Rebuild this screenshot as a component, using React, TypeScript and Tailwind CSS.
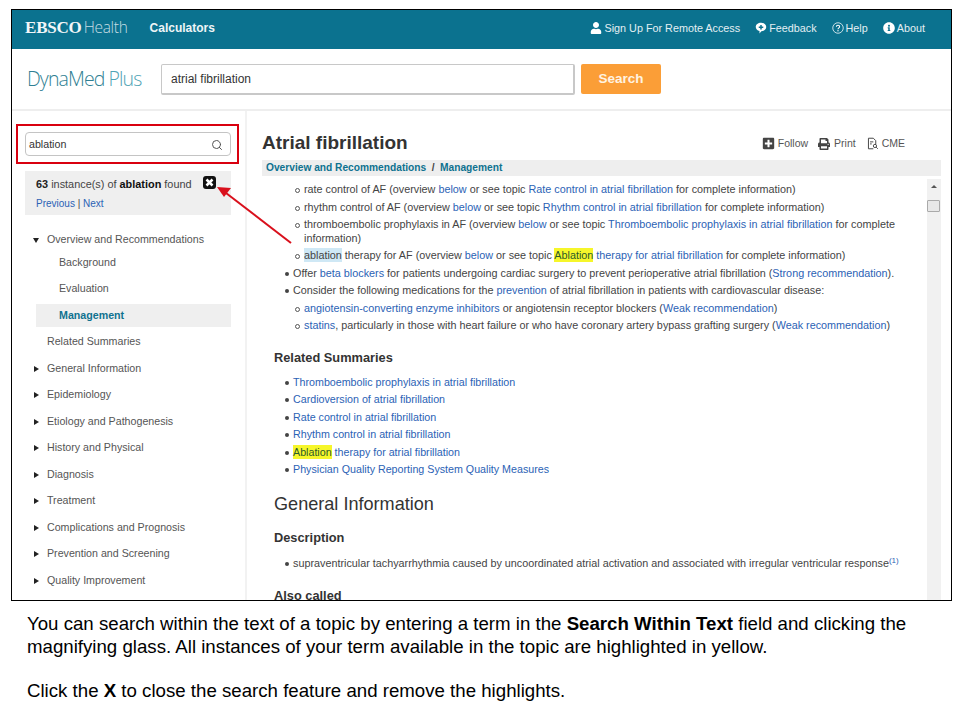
import { FaUser, FaInfoCircle, FaPlusSquare, FaPrint } from 'react-icons/fa'
import { Search } from 'lucide-react'
import type { ReactNode } from 'react'

const arial = "font-['Liberation_Sans',Arial,sans-serif]"

function A({ children }: { children: ReactNode }) {
  return <span className="text-[#2b62b5]">{children}</span>
}

function Hit({ children }: { children: ReactNode }) {
  return <span className="bg-[#f6f62a] text-[#2b5a2b] py-px">{children}</span>
}

const Circle = () => <span className="absolute left-[-9px] top-[5px] w-[5px] h-[5px] rounded-full border border-[#555]" />
const Dot = () => <span className="absolute left-[-8px] top-[5px] w-[4px] h-[4px] rounded-full bg-[#444]" />

function Sub({ children }: { children: ReactNode }) {
  return (
    <li className="relative ml-[30px] pb-1">
      <Circle />
      {children}
    </li>
  )
}

function Item({ children }: { children: ReactNode }) {
  return (
    <li className="relative ml-[19px] pb-1">
      <Dot />
      {children}
    </li>
  )
}

function NavRow({ label, arrow }: { label: string; arrow?: 'right' | 'down' }) {
  return (
    <div className="h-[26.5px] flex items-center relative pl-[22px] text-[#555]">
      {arrow === 'right' && <span className="absolute left-[9px] top-[10px] border-y-[3px] border-y-transparent border-l-[5px] border-l-[#222]" />}
      {arrow === 'down' && <span className="absolute left-[8px] top-[11px] border-x-[3px] border-x-transparent border-t-[5px] border-t-[#222]" />}
      {label}
    </div>
  )
}

export default function App() {
  const navItems = [
    'General Information',
    'Epidemiology',
    'Etiology and Pathogenesis',
    'History and Physical',
    'Diagnosis',
    'Treatment',
    'Complications and Prognosis',
    'Prevention and Screening',
    'Quality Improvement',
  ]

  return (
    <div className={`relative w-[960px] h-[720px] bg-white overflow-hidden pt-[9px] pl-[11px] ${arial}`}>
      <div className="w-[941px] h-[592px] border border-black overflow-hidden flex flex-col">
        {/* top bar */}
        <div className="h-[39px] shrink-0 bg-[#0b728f] flex items-center pl-[13px] pr-[26px] pb-[3px] text-white">
          <span className="font-['Liberation_Serif',serif] font-bold text-[17px] tracking-[-0.2px] text-[#f2f6f8]">EBSCO</span>
          <span className="font-['Open_Sans',sans-serif] font-light text-[15.5px] ml-[2px] text-[#c6dde4] tracking-[-0.3px]">Health</span>
          <span className="ml-[22px] font-bold text-[12px] text-[#eef5f7]">Calculators</span>
          <div className="ml-auto flex items-center text-[10.8px] text-[#e3eff3]">
            <FaUser className="w-[12px] h-[12px] mr-[3px] text-white" />
            <span>Sign Up For Remote Access</span>
            <svg viewBox="0 0 16 16" className="w-[12px] h-[12px] ml-[15px] mr-[2px]">
              <path fill="#fff" fillRule="evenodd" d="M8 1c4 0 7 2.5 7 5.7 0 3.2-3 5.500-6.500 5.500L6 15.300V12C3 11.300 1 9.300 1 6.700 1 3.500 4 1 8 1zM7 4v2H5v2h2v2h2V8h2V6H9V4z" />
            </svg>
            <span>Feedback</span>
            <svg viewBox="0 0 16 16" className="w-[12px] h-[12px] ml-[15px] mr-[2px]">
              <circle cx="8" cy="8" r="7" fill="none" stroke="#fff" strokeWidth="1" />
              <path fill="none" stroke="#fff" strokeWidth="1.400" d="M5.800 6.300C5.800 5 6.800 4.300 8 4.300s2.200.8 2.200 1.900c0 1.500-2.200 1.600-2.200 3.300" />
              <circle cx="8" cy="11.600" r="0.900" fill="#fff" />
            </svg>
            <span>Help</span>
            <FaInfoCircle className="w-[12px] h-[12px] ml-[15px] mr-[2px] text-white" />
            <span>About</span>
          </div>
        </div>

        {/* search bar */}
        <div className="h-[62px] shrink-0 border-b-2 border-[#eeeeee] flex items-start pl-[15px]">
          <div className="mt-[16px] w-[119px] whitespace-nowrap font-['Open_Sans',sans-serif] font-light text-[19.5px] leading-[28px] tracking-[-0.9px] text-[#2f7f93]">
            DynaMed <span className="text-[#4fa3b5]">Plus</span>
          </div>
          <div className="ml-[15px] mt-[15px] w-[414px] h-[31px] rounded-[2px] border border-[#c8c8c8] border-b-2 border-r-2 flex items-center pl-[9px] text-[12px] text-[#333]">
            atrial fibrillation
          </div>
          <div className="ml-[6px] mt-[15px] w-[80px] h-[30px] rounded-[2px] bg-[#fb9e37] flex items-center justify-center text-[13.5px] font-bold text-[#fff3e2]">
            Search
          </div>
        </div>

        <div className="flex flex-1 min-h-0">
          {/* left column */}
          <div className="w-[235px] shrink-0 border-r-2 border-[#f2f2f2] text-[10.66px] pl-[13px] pr-[14px] pt-[21px]">
            <div className="w-[206px] h-[24px] rounded-[4px] border border-[#c4c4c4] flex items-center pl-[3px] pr-[7px] pt-px text-[#333]">
              ablation
              <Search className="ml-auto w-[12px] h-[12px] text-[#555]" strokeWidth={2} />
            </div>
            <div className="mt-[15px] w-[206px] h-[44px] bg-[#efefef] pl-[11px] pt-[7px] relative leading-[13px] text-[#444]">
              <div className="text-[10.9px]">
                <b className="text-[#222]">63</b> instance(s) of <b className="text-[#111]">ablation</b> found
              </div>
              <div className="mt-[6px] text-[10px]">
                <A>Previous</A> | <A>Next</A>
              </div>
              <svg viewBox="0 0 13 13" className="absolute right-[15px] top-[5px] w-[13px] h-[13px]">
                <rect width="13" height="13" rx="3" fill="#111" />
                <path d="M3.500 3.500l6 6M9.500 3.500l-6 6" stroke="#fff" strokeWidth="2.500" />
              </svg>
            </div>

            <div className="mt-[12px] w-[206px]">
              <NavRow label="Overview and Recommendations" arrow="down" />
              <div className="-mt-[4px] h-[26.500px] flex items-center pl-[23px] ml-[11px] text-[#555]">Background</div>
              <div className="h-[26.500px] flex items-center pl-[23px] ml-[11px] text-[#555]">Evaluation</div>
              <div className="h-[23px] my-[1.750px] flex items-center pl-[23px] ml-[11px] bg-[#efefef] font-bold text-[#0f7290]">Management</div>
              <NavRow label="Related Summaries" />
              {navItems.map((n) => (
                <NavRow key={n} label={n} arrow="right" />
              ))}
            </div>
          </div>

          {/* topic */}
          <div className="flex-1 min-w-0 pl-[15px] pr-[10px] pt-[20px] flex flex-col">
            <div className="flex items-center h-[25px]">
              <h1 className="text-[19px] font-bold text-[#333]">Atrial fibrillation</h1>
              <div className="ml-auto mr-[36px] flex items-center text-[10.5px] text-[#555]">
                <FaPlusSquare className="w-[13px] h-[13px] mr-[3px] text-[#444]" />
                <span>Follow</span>
                <FaPrint className="w-[12px] h-[12px] ml-[10px] mr-[4px] text-[#444]" />
                <span>Print</span>
                <svg viewBox="0 0 16 16" className="w-[13px] h-[13px] ml-[10px] mr-[3px]" fill="none" stroke="#444" strokeWidth="1.200">
                  <path d="M3 1.500h6l3 3V9M3 1.500v13h6" />
                  <path d="M5 6h4M5 8.500h2" />
                  <circle cx="11" cy="11" r="2" />
                  <path d="M12.500 12.500l2 2" />
                </svg>
                <span>CME</span>
              </div>
            </div>
            <div className="mt-[4px] h-[16px] bg-[#eeeeee] flex items-center pl-[4px] text-[10.2px] font-bold text-[#0f7290] shrink-0">
              Overview and Recommendations<span className="mx-[5.5px] text-[#444]">/</span>Management
            </div>

            <div className="flex flex-1 min-h-0 mt-[3px]">
              <div className="flex-1 min-w-0 overflow-hidden pl-[12px] pr-[8px] pt-[4px] text-[10.8px] leading-[13.500px] text-[#444]">
                <ul>
                  <Sub>rate control of AF (overview <A>below</A> or see topic <A>Rate control in atrial fibrillation</A> for complete information)</Sub>
                  <Sub>rhythm control of AF (overview <A>below</A> or see topic <A>Rhythm control in atrial fibrillation</A> for complete information)</Sub>
                  <Sub>thromboembolic prophylaxis in AF (overview <A>below</A> or see topic <A>Thromboembolic prophylaxis in atrial fibrillation</A> for complete information)</Sub>
                  <Sub><span className="bg-[#cfe8f5] py-px">ablation</span> therapy for AF (overview <A>below</A> or see topic <Hit>Ablation</Hit> <A>therapy for atrial fibrillation</A> for complete information)</Sub>
                  <Item>Offer <A>beta blockers</A> for patients undergoing cardiac surgery to prevent perioperative atrial fibrillation (<A>Strong recommendation</A>).</Item>
                  <Item>Consider the following medications for the <A>prevention</A> of atrial fibrillation in patients with cardiovascular disease:</Item>
                  <Sub><A>angiotensin-converting enzyme inhibitors</A> or angiotensin receptor blockers (<A>Weak recommendation</A>)</Sub>
                  <Sub><A>statins</A>, particularly in those with heart failure or who have coronary artery bypass grafting surgery (<A>Weak recommendation</A>)</Sub>
                </ul>
                <h3 className="mt-[13px] text-[12.8px] leading-[16px] font-bold text-[#333]">Related Summaries</h3>
                <ul className="mt-[10px] text-[10.7px]">
                  <Item><A>Thromboembolic prophylaxis in atrial fibrillation</A></Item>
                  <Item><A>Cardioversion of atrial fibrillation</A></Item>
                  <Item><A>Rate control in atrial fibrillation</A></Item>
                  <Item><A>Rhythm control in atrial fibrillation</A></Item>
                  <Item><Hit>Ablation</Hit> <A>therapy for atrial fibrillation</A></Item>
                  <Item><A>Physician Quality Reporting System Quality Measures</A></Item>
                </ul>
                <h2 className="mt-[11px] text-[18.1px] leading-[24px] text-[#333]">General Information</h2>
                <h3 className="mt-[14px] text-[12.8px] leading-[16px] font-bold text-[#333]">Description</h3>
                <ul className="mt-[11px]">
                  <Item>supraventricular tachyarrhythmia caused by uncoordinated atrial activation and associated with irregular ventricular response<sup className="text-[8px] text-[#2b62b5] leading-none">(1)</sup></Item>
                </ul>
                <h3 className="mt-[14px] text-[12.8px] leading-[16px] font-bold text-[#333]">Also called</h3>
              </div>
              {/* scrollbar */}
              <div className="w-[14px] shrink-0 bg-[#f1f1f1] relative">
                <span className="absolute left-[4px] top-[6px] border-x-[3px] border-x-transparent border-b-[3px] border-b-[#555]" />
                <div className="absolute left-0 top-[21px] w-[13px] h-[12px] rounded-[1px] bg-[#e8e8e8] border border-[#aaa]" />
              </div>
            </div>
          </div>
        </div>
      </div>

      {/* caption */}
      <div className="pl-[16px] pr-[40px] mt-[12px] text-[18.67px] leading-[22.5px] text-black">
        <p>You can search within the text of a topic by entering a term in the <b>Search Within Text</b> field and clicking the magnifying glass. All instances of your term available in the topic are highlighted in yellow.</p>
        <p className="mt-[21.5px]">Click the <b>X</b> to close the search feature and remove the highlights.</p>
      </div>

      {/* annotation */}
      <div className="absolute left-[16px] top-[124px] w-[223px] h-[40px] border-[2px] border-[#d9000f]" />
      <svg className="absolute left-0 top-0 pointer-events-none" width="960" height="720">
        <line x1="291" y1="243" x2="226" y2="193" stroke="#d9101c" strokeWidth="2" />
        <path d="M217 187l14 1-7 9z" fill="#d9101c" />
      </svg>
    </div>
  )
}
